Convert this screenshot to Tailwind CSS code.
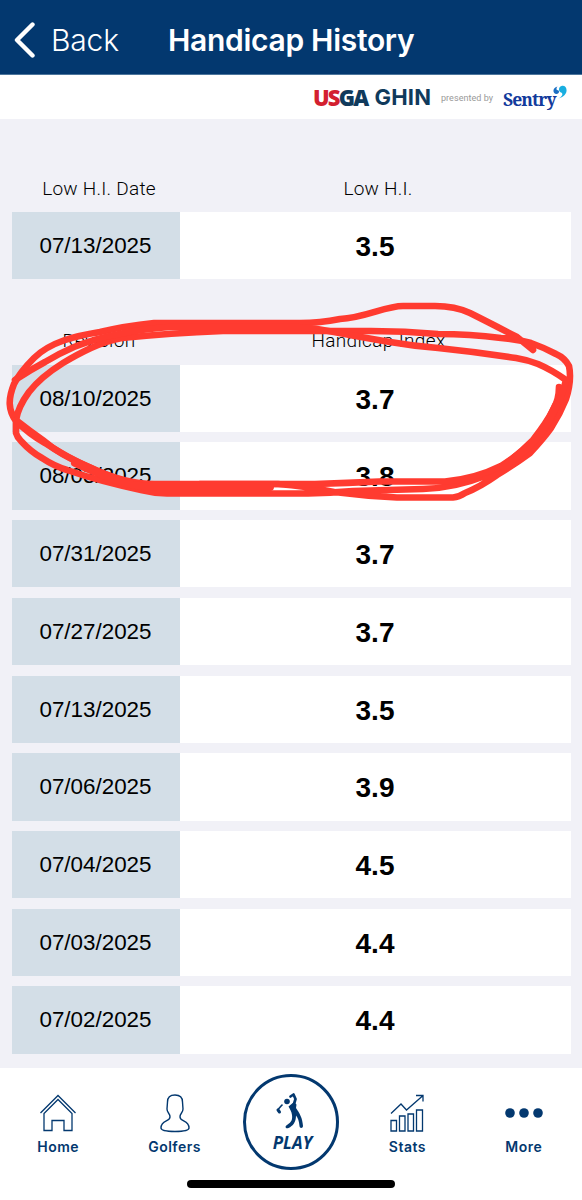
<!DOCTYPE html>
<html lang="en">

<head>
  <meta charset="UTF-8" />
  <title>Handicap History</title>
  <script src="https://cdn.jsdelivr.net/npm/@tailwindcss/browser@4"></script>
</head>

<body class="relative w-[582px] h-[1200px] overflow-hidden flex flex-col bg-[#f1f1f7] font-['Liberation_Sans',sans-serif] text-black">
  <!-- Header -->
  <header class="h-[75px] shrink-0 bg-[#03386f] border-b border-[#4c759c] flex items-center pt-1.5 pl-3.5 text-white font-['Inter',sans-serif] whitespace-nowrap">
    <svg class="w-[22px] h-9 shrink-0" viewBox="0 0 22 36" fill="none" stroke="white" stroke-width="4.4" stroke-linecap="round" stroke-linejoin="round">
      <path d="M18.500 2.500L3 18L18.500 33.500" />
    </svg>
    <span class="ml-[15px] w-[117px] text-[30px] font-light tracking-[-0.2px]">Back</span>
    <h1 class="text-[30px] font-semibold tracking-[-0.300px]">Handicap History</h1>
  </header>

  <!-- Sponsor bar -->
  <div class="h-[44px] shrink-0 bg-white flex items-center justify-end pr-[14px] whitespace-nowrap">
    <div class="w-[128px] flex items-center font-['Open_Sans',sans-serif] text-[22px] leading-none text-[#103a5c]">
      <span class="font-extrabold tracking-[-1.800px]"><span class="text-[#d3202f]">US</span>GA</span>
      <span class="ml-[7px] font-['Inter',sans-serif] font-bold tracking-[0.200px]">GHIN</span>
    </div>
    <span class="w-[62px] pt-1 text-[9px] text-[#999] tracking-[0.05px] font-['Roboto',sans-serif]">presented by</span>
    <div class="w-[65px] flex items-start">
      <span class="mt-1 font-['Noto_Serif','DejaVu_Serif',serif] font-bold text-[17.500px] leading-5 tracking-[-0.900px] text-[#123a9c]">Sentry</span>
      <svg class="w-[14px] h-[16px] -ml-[3px] shrink-0" viewBox="0 0 14 16">
        <path fill="#1b6fc4" d="M4.500 1.500C-1 2.500 -0.500 9 3.500 9C6.500 9 7 5 4 5C3 4 3.500 2.500 4.500 1.500Z" />
        <path fill="#18aee0" d="M8.500 1C15 -0.500 16.500 11 5.500 13.500C9.500 11 10.500 8.500 8 7.500C5 6 5.500 2 8.500 1Z" />
      </svg>
    </div>
  </div>

  <!-- Low handicap index -->
  <main class="h-[949px] shrink-0 px-3 pt-[58px] flex flex-col">
    <div class="h-[35px] grid grid-cols-[168px_391px] text-center font-['Roboto',sans-serif] font-light text-[19px] leading-6 tracking-[0.250px]">
      <span class="pl-[6px]">Low H.I. Date</span>
      <span class="pl-[5px]">Low H.I.</span>
    </div>
    <div id="lowRow"></div>

    <!-- Revisions -->
    <div class="mt-[50px] h-[35.500px] grid grid-cols-[168px_391px] text-center font-['Roboto',sans-serif] font-light text-[19px] leading-6 tracking-[0.350px]">
      <span class="pl-[6px]">Revision</span>
      <span class="pl-[6px]">Handicap Index</span>
    </div>
    <div id="revisionRows" class="flex flex-col gap-[10.400px]"></div>
  </main>

  <!-- Bottom navigation -->
  <nav class="h-[132px] shrink-0 bg-white text-[#03386f] font-['Inter',sans-serif]">
    <div class="h-[109px] grid grid-cols-5 text-[14px] font-semibold tracking-[0.500px] text-center">
      <div class="flex flex-col items-center pt-[25px]">
        <svg class="w-[38px] h-[40px]" viewBox="0 0 38 40" fill="none" stroke="currentColor" stroke-width="1.300">
          <path d="M1.500 20L19 2.500L36.500 20M5 20.500V37.500H13V27.500H25V37.500H33V20.500L19 6.500Z" />
        </svg>
        <span class="mt-[4px] leading-5">Home</span>
      </div>
      <div class="flex flex-col items-center pt-[25px]">
        <svg class="w-[32px] h-[40px]" viewBox="0 0 32 40" fill="none" stroke="currentColor" stroke-width="1.400">
          <path d="M16 2C11 2 8.500 4 8.500 9L8 16C8 20 11 20 11 24C11 29 2 27 2 35C2 38 8 38.500 16 38.500S30 38 30 35C30 27 21 29 21 24C21 20 24 20 24 16L23.500 9C23.500 4 21 2 16 2Z" />
        </svg>
        <span class="mt-[4px] leading-5">Golfers</span>
      </div>
      <div class="flex justify-center pt-[6px]">
        <div class="w-[96px] h-[96px] shrink-0 rounded-full border-3 border-[#03386f] flex flex-col items-center pt-[14px]">
          <svg class="w-[30px] h-[38px] -ml-[4px]" viewBox="0 0 30 38" fill="none" stroke="currentColor" stroke-linecap="round" stroke-linejoin="round">
            <circle cx="13" cy="10.500" r="2.800" fill="currentColor" stroke="none" />
            <path stroke-width="2.700" d="M16.500 5.500L19.500 3.500L21.500 8L20 13" />
            <path fill="currentColor" stroke="none" d="M14.500 15.500L20 11L22.500 13.500L22 17C25.500 22 28.500 27 29 35C29 37.500 25.500 37.500 25.500 35C25 30 24 27 22 24.500C22 31 19 35 14.500 37C11.500 38 10.500 35.500 13 34C18 31 18.500 28 18 24C17.500 20.500 16 18.500 14.500 15.500Z" />
            <path stroke-width="1.600" d="M8 14L4 18.500" />
            <path stroke-width="3" d="M4 19L5.500 21" />
          </svg>
          <span class="mt-[4px] ml-[3px] text-[17px] leading-5 font-bold italic tracking-[0.050px] font-['Open_Sans',sans-serif]">PLAY</span>
        </div>
      </div>
      <div class="flex flex-col items-center pt-[25px]">
        <svg class="w-[36px] h-[40px]" viewBox="0 0 36 40" fill="none" stroke="currentColor" stroke-width="1.300">
          <path d="M2 20.500L12 11L17.500 17L33.500 3M27 2.500H34V8.500" />
          <path d="M2 27.500H7.500V38H2ZM10.500 23H16V38H10.500ZM19 21H24.500V38H19ZM27.500 17H33.500V38H27.500Z" />
        </svg>
        <span class="mt-[4px] leading-5">Stats</span>
      </div>
      <div class="flex flex-col items-center pt-[25px]">
        <svg class="w-[40px] h-[40px]" viewBox="0 0 40 40" fill="currentColor">
          <circle cx="6" cy="20" r="4.800" />
          <circle cx="20" cy="20" r="4.800" />
          <circle cx="34" cy="20" r="4.800" />
        </svg>
        <span class="mt-[4px] leading-5">More</span>
      </div>
    </div>
    <div class="mx-auto mt-[3px] w-[208px] h-[8px] rounded-full bg-black"></div>
  </nav>

  <!-- Hand-drawn markup -->
  <svg class="absolute left-0 top-0 w-[582px] h-[1200px] pointer-events-none" viewBox="0 0 582 1200" fill="none" stroke="#ff3b30" stroke-width="6.600" stroke-linecap="round" stroke-linejoin="round">
    <path d="M533 350L517 337Q490 323 470 313Q455 306 435 306H403C385 306 365 318 340 319Q320 323 300 323H154Q125 326 100 332C75 336 50 342 34 358Q20 372 14 384C8 399 8 410 16 421Q30 435 45 443Q68 458 91 468Q125 484 154 484H278Q305 486 334 492Q365 496 397 497.500H453Q459 497 465 493Q480 487 497 475Q515 464 530 453Q543 439 551 428Q560 414 566 399Q572 380 569 366Q565 358 556 354Q545 348 531 343Q516 339 501 338Q470 334 438 334Q405 331 371 331H223Q170 333 122 338C110 340 100 344 91 348Q78 354 63 363C47 373 36 383 29 392Q18 407 16 420V433Q17 437 21 441Q31 452 42 458Q54 466 67 470Q102 482 141 490Q153 493 167 493.500H308Q330 493 353 491Q388 490 423 489Q455 488 485 476Q496 472 503 466Q520 453 533 440Q547 422 553 410Q559 400 559 387" />
    <path d="M15 380Q30 370 45 362Q58 354 74 347Q97 338 119 334Q143 329 169 327H297Q316 328 334 332Q360 337 390 342Q413 346 438 348Q477 352 516 358Q528 360 538 364Q552 370 566 380Q562 397 555 410Q548 428 534 441Q516 457 501 466Q475 479 445 481.500H379Q348 483 315 484H200" />
    <path d="M16 420Q30 431 44 441Q60 455 89 467Q105 475 125 481" />
    <path stroke-width="8" d="M75 463Q105 477 125 483Q140 487 158 487H270M556 405Q545 432 525 450L504 467" />
  </svg>

  <script>
    const lowHandicap = [["07/13/2025", "3.5"]];

    const revisions = [
      ["08/10/2025", "3.7"],
      ["08/03/2025", "3.8"],
      ["07/31/2025", "3.7"],
      ["07/27/2025", "3.7"],
      ["07/13/2025", "3.5"],
      ["07/06/2025", "3.9"],
      ["07/04/2025", "4.5"],
      ["07/03/2025", "4.4"],
      ["07/02/2025", "4.4"]
    ];

    const renderRows = (id, rows) => {
      document.getElementById(id).innerHTML = rows.map(([date, index]) => `
        <div class="h-[67.300px] grid grid-cols-[168px_391px] text-center">
          <div class="bg-[#d3dee7] pr-px text-[22.400px] leading-[67px]">${date}</div>
          <div class="bg-white pt-[2px] pr-px text-[28px] leading-[65px] font-bold">${index}</div>
        </div>`).join("");
    };

    renderRows("lowRow", lowHandicap);
    renderRows("revisionRows", revisions);
  </script>
</body>

</html>
